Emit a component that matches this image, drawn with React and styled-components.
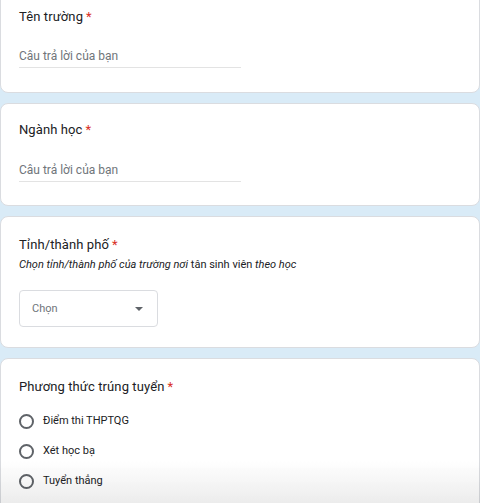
import React from "react";
import styled, { createGlobalStyle } from "styled-components";

const Global = createGlobalStyle`
  html, body { margin: 0; padding: 0; }
  body {
    background: #d9ebf7;
    font-family: Roboto, "Liberation Sans", Arial, sans-serif;
    color: #202124;
    overflow: hidden;
  }
`;

const Page = styled.div`
  display: flex;
  flex-direction: column;
  gap: 10px;
  margin-top: -11px;
`;

const Card = styled.section`
  background: #fff;
  border: 1px solid #dadce0;
  border-radius: 8px;
  padding: ${(p) => p.$pt || 17}px 18px ${(p) => p.$pb || 20}px 18px;
  display: flex;
  flex-direction: column;
`;

const Title = styled.div`
  font-size: 13px;
  line-height: 18px;
  color: #202124;
  letter-spacing: 0.1px;
`;

const Star = styled.span`
  color: #d93025;
  margin-left: 3px;
`;

const Desc = styled.div`
  font-size: 11px;
  line-height: 16px;
  margin-top: 3px;
  color: #202124;
  em { font-style: italic; }
`;

const TextInput = styled.div`
  width: 222px;
  margin-top: ${(p) => p.$mt}px;
  padding-bottom: 3px;
  border-bottom: 1px solid #e3e3e3;
  font-size: 12px;
  line-height: 16px;
  color: #70757a;
`;

const Select = styled.div`
  margin-top: 17px;
  width: 139px;
  height: 37px;
  box-sizing: border-box;
  border: 1px solid #dadce0;
  border-radius: 4px;
  display: flex;
  align-items: center;
  justify-content: space-between;
  padding: 0 14px 0 12px;
  font-size: 11px;
  color: #70757a;
`;

const Arrow = styled.span`
  width: 0;
  height: 0;
  border-left: 4px solid transparent;
  border-right: 4px solid transparent;
  border-top: 4px solid #5f6368;
`;

const Options = styled.div`
  display: flex;
  flex-direction: column;
  gap: 12px;
  margin-top: 16px;
`;

const Option = styled.label`
  display: flex;
  align-items: center;
  gap: 9px;
  font-size: 11px;
  line-height: 18px;
  color: #202124;
`;

const Radio = styled.span`
  width: 15px;
  height: 15px;
  box-sizing: border-box;
  border: 2px solid #5f6368;
  border-radius: 50%;
`;

const Fade = styled.div`
  position: fixed;
  left: 0;
  right: 0;
  bottom: 0;
  height: 42px;
  background: linear-gradient(to bottom, rgba(236,236,236,0), rgba(236,236,236,1));
  mix-blend-mode: multiply;
  pointer-events: none;
`;

export default function App() {
  return (
    <>
      <Global />
      <Page>
        <Card $pt={18} $pb={24}>
          <Title>Tên trường<Star>*</Star></Title>
          <TextInput $mt={22}>Câu trả lời của bạn</TextInput>
        </Card>
        <Card $pt={17} $pb={23}>
          <Title>Ngành học<Star>*</Star></Title>
          <TextInput $mt={23}>Câu trả lời của bạn</TextInput>
        </Card>
        <Card $pt={19} $pb={20}>
          <Title>Tỉnh/thành phố<Star>*</Star></Title>
          <Desc>
            <em>Chọn tỉnh/thành phố của trường nơi</em> tân sinh viên <em>theo học</em>
          </Desc>
          <Select>
            Chọn
            <Arrow />
          </Select>
        </Card>
        <Card $pt={19} $pb={30}>
          <Title>Phương thức trúng tuyển<Star>*</Star></Title>
          <Options>
            <Option><Radio />Điểm thi THPTQG</Option>
            <Option><Radio />Xét học bạ</Option>
            <Option><Radio />Tuyển thẳng</Option>
          </Options>
        </Card>
      </Page>
      <Fade />
    </>
  );
}
